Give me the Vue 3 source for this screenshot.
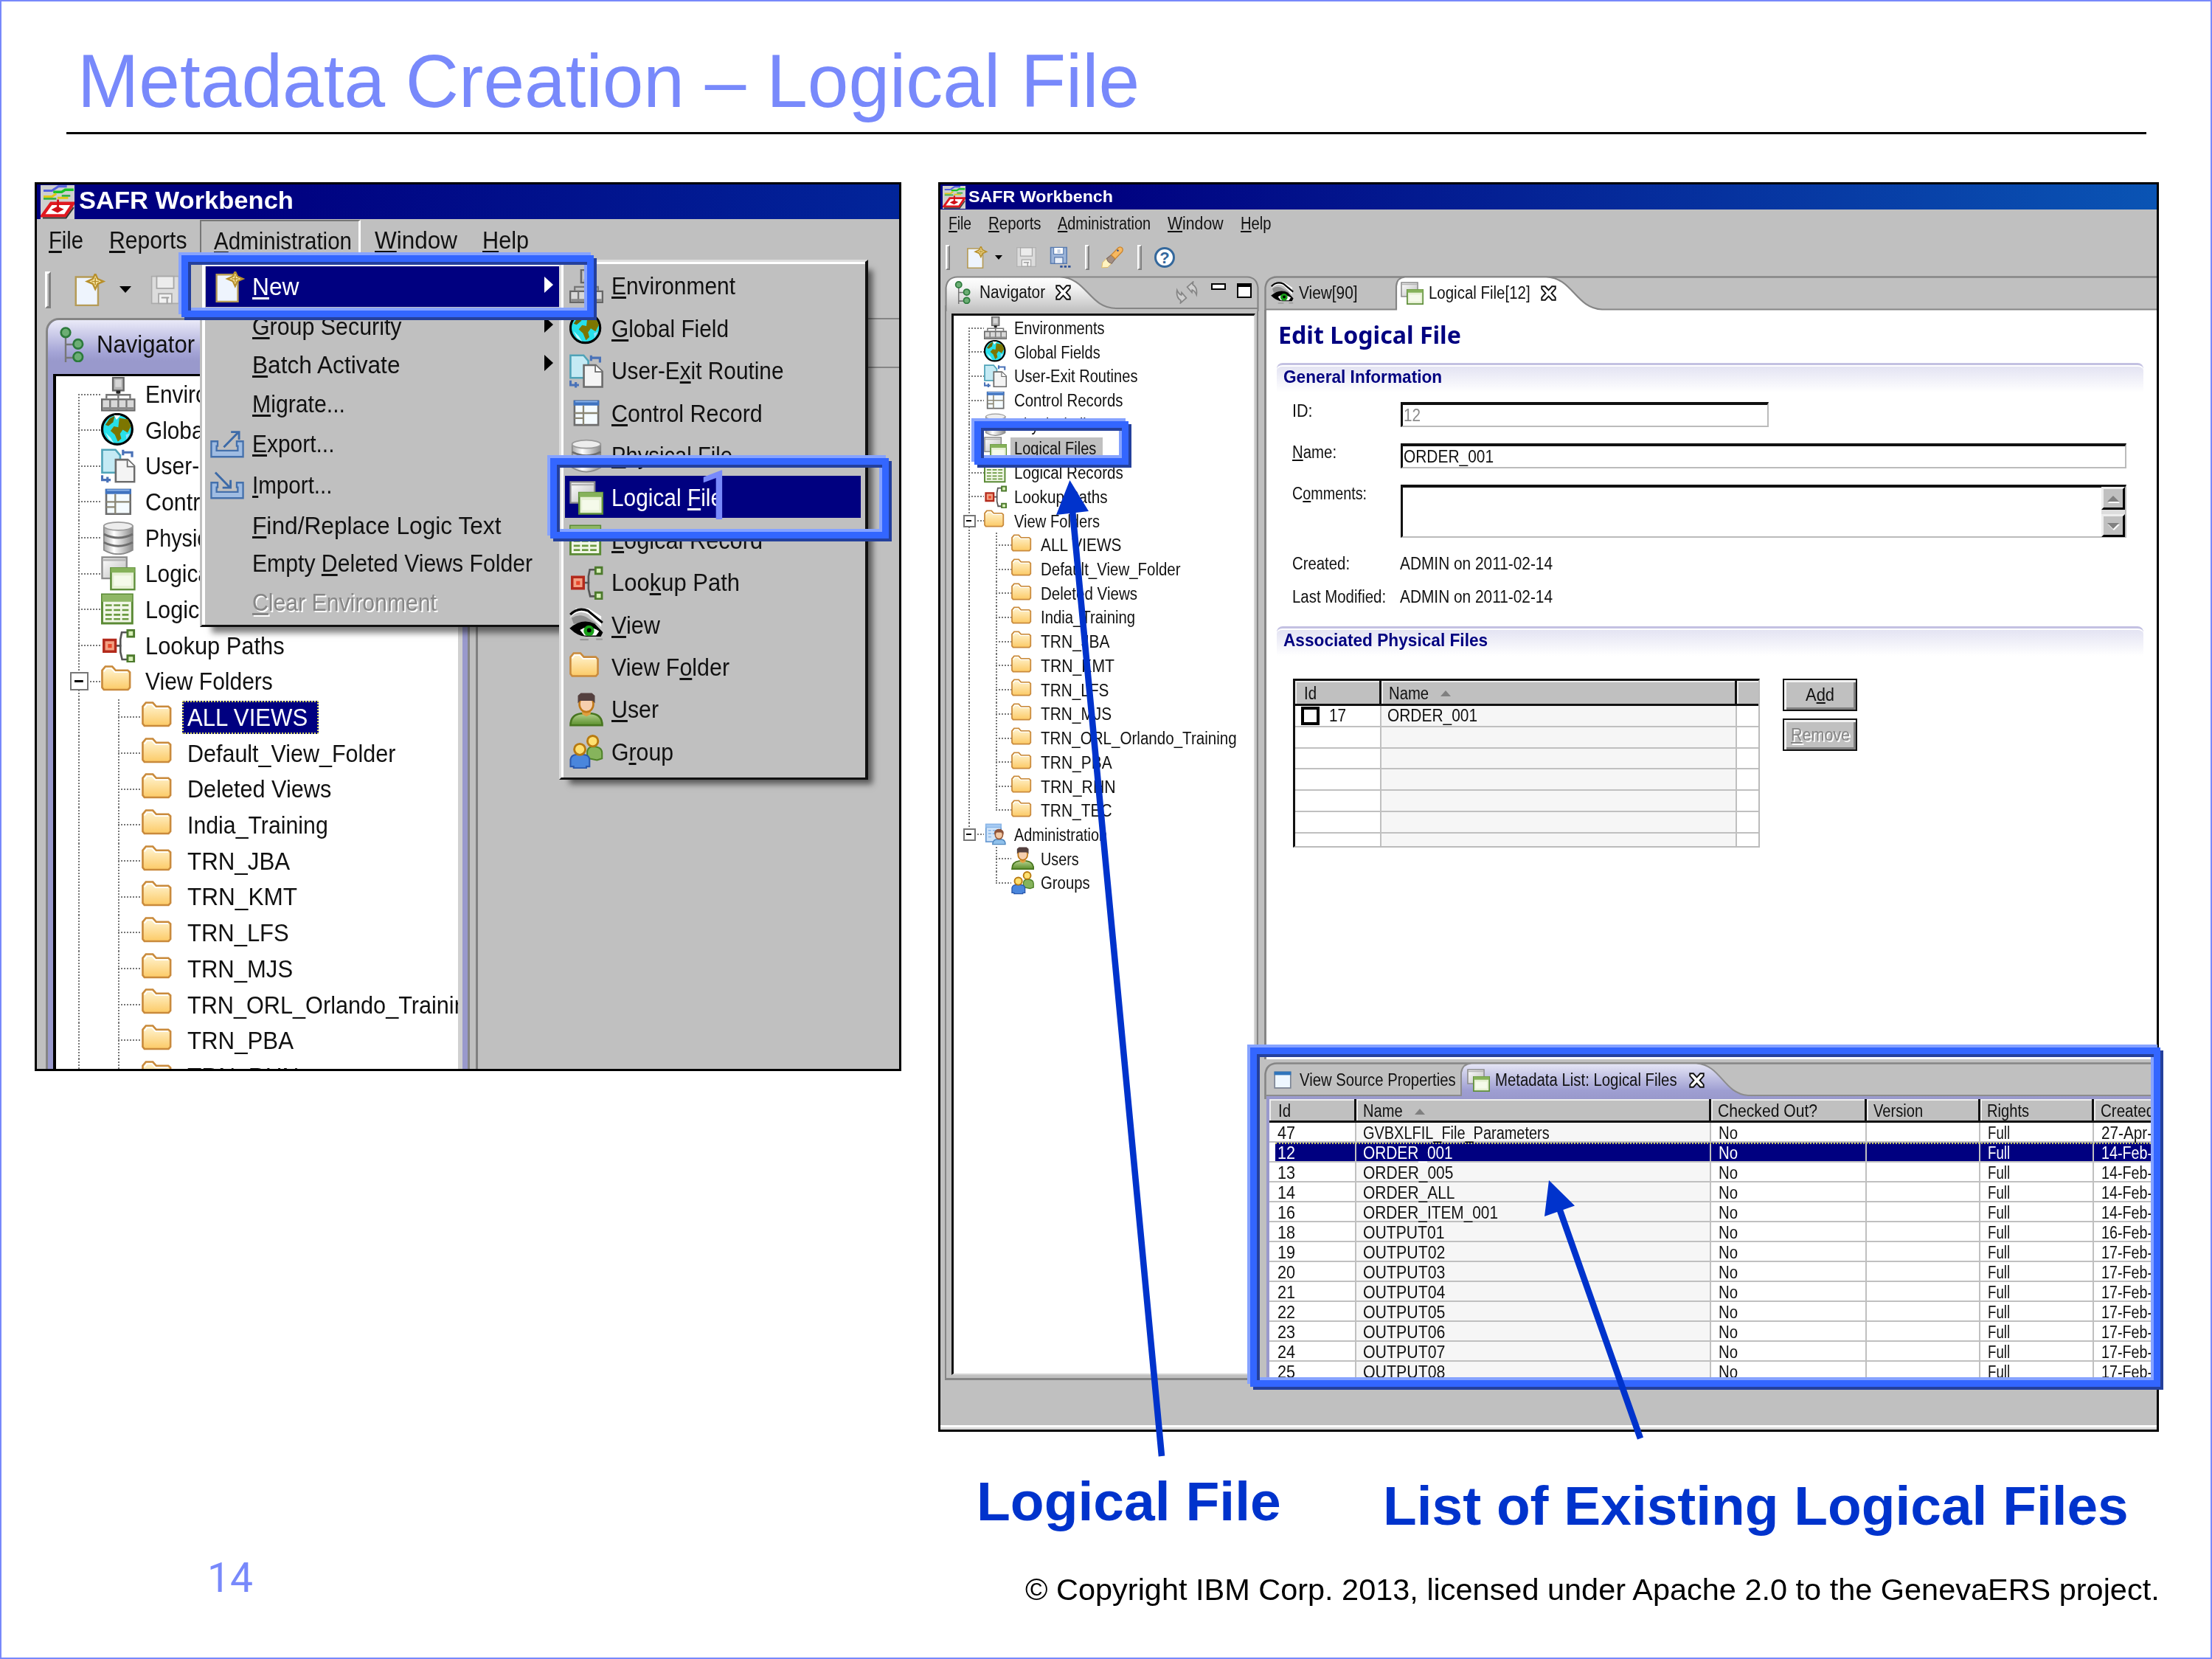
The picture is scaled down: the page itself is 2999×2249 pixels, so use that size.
<script setup>
import { h, withDirectives } from 'vue'

// Condenses a label to the given drawn width and keeps the flow in step with it.
const fit = {
  mounted(el, { value }) {
    const size = parseFloat(getComputedStyle(el).fontSize)
    const natural = el.getBoundingClientRect().width
    const target = value + size * 0.09
    el.style.transform = `scaleX(${target / natural})`
    el.style.marginLeft = `${-size * 0.035}px`
    el.style.marginRight = `${target - natural - size * 0.055}px`
  },
}

// Label with an optional mnemonic: the letter after "&" is underlined.
const T = (props) => {
  const i = props.s.indexOf('&')
  const parts = i < 0 ? [props.s] : [props.s.slice(0, i), h('u', props.s[i + 1]), props.s.slice(i + 2)]
  return withDirectives(h('span', { class: 't' }, parts), [[fit, Number(props.w)]])
}
T.props = ['s', 'w']

const roots = [
  ['env', 'Environments', 120.4], ['globe', 'Global Fields', 114.6], ['exit', 'User-Exit Routines', 165.4],
  ['control', 'Control Records', 145.4], ['physical', 'Physical Files', 116], ['lfile', 'Logical Files', 109.3],
  ['lrecord', 'Logical Records', 145.7], ['lookup', 'Lookup Paths', 124.6],
].map(([icon, s, w]) => ({ icon, s, w, lvl: 1 }))
const folders = [
  ['ALL VIEWS', 107.5], ['Default_View_Folder', 187.5], ['Deleted Views', 129], ['India_Training', 126],
  ['TRN_JBA', 91.4], ['TRN_KMT', 98], ['TRN_LFS', 90.4], ['TRN_MJS', 94], ['TRN_ORL_Orlando_Training', 263.6],
  ['TRN_PBA', 94.6], ['TRN_RHN', 99.6], ['TRN_TEC', 94.6],
].map(([s, w]) => ({ icon: 'folder', s, w, lvl: 2, outer: true }))
const tree = [
  ...roots,
  { icon: 'folder', s: 'View Folders', w: 114, lvl: 1, open: true },
  ...folders,
  { icon: 'admin', s: 'Administration', w: 124, lvl: 1, open: true, end: true },
  { icon: 'user', s: 'Users', w: 49.6, lvl: 2 },
  { icon: 'group', s: 'Groups', w: 64.6, lvl: 2 },
]
tree[20].end = true
tree[23].end = true
tree[0].first = true
const leftTree = tree.slice(0, 20)

const menuL = [['&File', 44], ['&Reports', 102.5], ['&Administration', 184], ['&Window', 109], ['&Help', 60]]
const menuR = [['&File', 29], ['&Reports', 69.5], ['&Administration', 124], ['&Window', 73.5], ['&Help', 39.5]]

const adminMenu = [
  { s: '&New', w: 60.5, h: 55, icon: 'new', sub: true, on: true },
  { s: '&Group Security', w: 199.5, h: 53, sub: true },
  { s: '&Batch Activate', w: 197.5, h: 52, sub: true },
  { s: '&Migrate...', w: 123, h: 53 },
  { s: '&Export...', w: 108.5, h: 55, icon: 'export' },
  { s: '&Import...', w: 105.5, h: 58, icon: 'import' },
  { s: '&Find/Replace Logic Text', w: 334.5, h: 51 },
  { s: 'Empty &Deleted Views Folder', w: 377, h: 52 },
  { s: '&Clear Environment', w: 247, h: 53, off: true },
]
const newMenu = [
  ['env', '&Environment', 165], ['globe', '&Global Field', 156], ['exit', 'User-E&xit Routine', 230.5],
  ['control', '&Control Record', 201.7], ['physical', '&Physical File', 161], ['lfile', 'Logical &File', 148],
  ['lrecord', '&Logical Record', 202], ['lookup', 'Loo&kup Path', 171], ['eye', '&View', 63],
  ['folder', 'View F&older', 157], ['user', '&User', 61], ['group', 'G&roup', 81],
]

const rows = [
  ['47', 'GVBXLFIL_File_Parameters', 250.6, '27-Apr-'], ['12', 'ORDER_001', 119.6, '14-Feb-'],
  ['13', 'ORDER_005', 120.4, '14-Feb-'], ['14', 'ORDER_ALL', 122.4, '14-Feb-'],
  ['16', 'ORDER_ITEM_001', 181, '14-Feb-'], ['18', 'OUTPUT01', 108.5, '16-Feb-'],
  ...[2, 3, 4, 5, 6, 7, 8].map((n) => [String(n + 17), `OUTPUT0${n}`, 109.4, '17-Feb-']),
]
const cols = [
  ['Id', 15, 'c-id'], ['Name', 51.5, 'c-name'], ['Checked Out?', 133, 'c-out'],
  ['Version', 65, 'c-ver'], ['Rights', 55, 'c-rights'], ['Created', 71, 'c-date'],
]
</script>

<template>
  <div class="slide">
    <svg class="defs" width="0" height="0">
      <defs>
        <linearGradient id="g-fold" x1="0" y1="0" x2="0" y2="1"><stop offset="0" stop-color="#fff6d6" /><stop offset="1" stop-color="#fcca66" /></linearGradient>
        <linearGradient id="g-gray" x1="0" y1="0" x2="1" y2="1"><stop offset="0" stop-color="#fff" /><stop offset="1" stop-color="#bdbdbd" /></linearGradient>
        <linearGradient id="g-cyl" x1="0" y1="0" x2="1" y2="0"><stop offset="0" stop-color="#a8a8a8" /><stop offset=".35" stop-color="#fff" /><stop offset="1" stop-color="#8a8a8a" /></linearGradient>
        <linearGradient id="g-purple" x1="0" y1="0" x2="0" y2="1"><stop offset="0" stop-color="#e6e6f6" /><stop offset=".75" stop-color="#9f9fd2" /><stop offset="1" stop-color="#9999cc" /></linearGradient>
        <linearGradient id="g-white" x1="0" y1="0" x2="0" y2="1"><stop offset="0" stop-color="#fff" /><stop offset=".3" stop-color="#f4f4f4" /><stop offset="1" stop-color="#c0c0c0" /></linearGradient>
        <linearGradient id="g-green" x1="0" y1="0" x2="0" y2="1"><stop offset="0" stop-color="#b4d08c" /><stop offset="1" stop-color="#5a8f2c" /></linearGradient>
      </defs>
      <symbol id="i-folder" viewBox="0 0 16 16">
        <path d="M.5 11V3L2 1.2h3.2L6.8 3h5.6l1 .9V11l-.9 1H1.3z" fill="url(#g-fold)" stroke="#c98a3c" stroke-width=".9" />
        <path d="M1.3 3.6l1.2-1.5h2.3l1.6 1.7h6" fill="none" stroke="#fff" stroke-width=".6" />
      </symbol>
      <symbol id="i-env" viewBox="0 0 16 16">
        <path d="M8 6v4M2.5 10V8.3h11V10" fill="none" stroke="#777" stroke-width=".8" />
        <rect x="5.5" y=".3" width="5" height="6" fill="#b5b5b5" stroke="#666" stroke-width=".8" /><rect x="6.6" y="1.3" width="2.8" height="3.4" fill="#d6d6d6" /><path d="M7 6.3h2v1.4H7z" fill="#222" />
        <path d="M.4 10.4h15.2v5.2H.4z" fill="#d8d8d8" stroke="#666" stroke-width=".8" /><path d="M4.2 10.4v5M8 10.4v5M11.8 10.4v5" stroke="#777" stroke-width=".8" /><path d="M.8 14h14.4v1.2H.8z" fill="#8a8a8a" />
      </symbol>
      <symbol id="i-globe" viewBox="0 0 16 16">
        <circle cx="7.5" cy="7.5" r="7" fill="#27e0ea" stroke="#000" stroke-width="1.1" />
        <path d="M2 5.5L4 2.5l2.4-1.2L5.6 4.2 3.4 6z" fill="#6a6400" /><path d="M8.5 2.3l4 .6 1.4 3.2-1.6 3-2.2-1.4L8.8 9.6l.6 2.2-1.6 1.5L6.4 10 4.4 8.2 6 6.2l2 .4z" fill="#7d7600" /><path d="M6 .9l3 .2-1.8 2z" fill="#fff" /><path d="M2 9l2.4 2.4L6 14l-2.4-1.8z" fill="#bff7fb" /><path d="M11.5 10l1.8-.6-1.4 2.8z" fill="#9df" />
      </symbol>
      <symbol id="i-exit" viewBox="0 0 16 16">
        <path d="M.5.6h6.2l2.2 2.6v8H.5z" fill="#c4eaf4" stroke="#4fa3b8" stroke-width=".9" />
        <path d="M6.8 5.2h5.6l3.1 3v7.3H6.8z" fill="#f4f4f4" stroke="#6b6b6b" stroke-width=".9" /><path d="M12.2 5.2v3.2h3.3" fill="#fff" stroke="#6b6b6b" stroke-width=".6" />
        <path d="M10.2.6v2.6M10.4 1.8h4V4M.5 12.4v2.2h4M3 13.2v2.6" fill="none" stroke="#4a72b8" stroke-width="1.1" />
      </symbol>
      <symbol id="i-control" viewBox="0 0 16 16">
        <path d="M2.4 2.4h11.2v11.2H2.4z" fill="#f4fbff" stroke="#6d6d6d" stroke-width=".9" /><path d="M2 2h12v2.4H2z" fill="#3f73c0" /><path d="M2.8 2.6h10.4" stroke="#8fb6ea" stroke-width=".6" /><path d="M6.6 4.4v9.2M2.4 8h11.2M2.4 10.4h4" stroke="#8b8775" stroke-width=".8" />
      </symbol>
      <symbol id="i-physical" viewBox="0 0 16 16">
        <path d="M1.3 2.4h13.4v11.2q-6.7 3.8-13.4 0z" fill="url(#g-cyl)" stroke="#8a8a8a" stroke-width=".6" /><ellipse cx="8" cy="2.5" rx="6.7" ry="1.9" fill="#ededed" stroke="#9a9a9a" stroke-width=".6" />
        <path d="M1.3 6.2q6.7 3.4 13.4 0M1.3 10q6.7 3.4 13.4 0" fill="none" stroke="#6e6e6e" stroke-width="1" />
      </symbol>
      <symbol id="i-lfile" viewBox="0 0 16 16">
        <path d="M.5.5h11.4v9.8H.5z" fill="url(#g-gray)" stroke="#8c8c8c" stroke-width=".8" /><path d="M1 1.8h10.4" stroke="#b4b4b4" stroke-width=".8" />
        <path d="M4.6 5.6h11v9.9h-11z" fill="#e6f0d4" stroke="#5f8f3a" stroke-width=".9" /><path d="M4.6 5.4h11v2.2h-11z" fill="#86b25a" /><path d="M6 9h8v4.8H6z" fill="#f5faea" />
      </symbol>
      <symbol id="i-lrecord" viewBox="0 0 16 16">
        <path d="M.5 1h14v13.4H.5z" fill="#f2f7e8" stroke="#5a8a34" stroke-width="1" /><path d="M.5 1h14v3.4H.5z" fill="#8fb766" /><path d="M2 6h11M2 8.2h11M2 10.4h11M2 12.4h11" stroke="#6b9a40" stroke-width=".9" stroke-dasharray="3 .9" />
      </symbol>
      <symbol id="i-lookup" viewBox="0 0 16 16">
        <path d="M6.5 8h3M12 1.8H9.6L9 5v6l.8 3.4H12" fill="none" stroke="#555" stroke-width=".9" />
        <path d="M1.3 5.3h5.4v5.4H1.3z" fill="#f3a083" stroke="#b32a1c" stroke-width="1.2" /><path d="M3.2 7.2h1.8V9H3.2z" fill="#e8472a" />
        <path d="M12.3.8h3v3h-3zM12.3 12.6h3v3h-3z" fill="#d8f0b8" stroke="#4c7a2c" stroke-width="1" />
      </symbol>
      <symbol id="i-eye" viewBox="0 0 16 16">
        <path d="M0 5Q4 .5 9 3l6 6V4L9 .3H3z" fill="#fff" /><path d="M.4 3.2Q4-.6 8.8 1.4L15.6 7" fill="none" stroke="#000" stroke-width="1.1" /><path d="M1 4.800q4-2.600 8 .2l4 2.600H2z" fill="#8e8e8e" />
        <path d="M.2 9.600Q6 4.600 12 7.600l3.800 4-1 2H8Q4 13.600 0 9.600z" fill="#000" /><path d="M5 10.400q4-2.600 9 .6l-1.400 2H7z" fill="#fff" /><circle cx="9.2" cy="10.8" r="2.5" fill="#18a018" /><circle cx="9.3" cy="10.6" r="1" fill="#000" /><path d="M5 15h4M12.6 14.8h3" stroke="#999" stroke-width=".8" />
      </symbol>
      <symbol id="i-user" viewBox="0 0 16 16">
        <path d="M.5 15.4q0-5 5-5.6h5q5 .6 5 5.6z" fill="url(#g-green)" stroke="#47751f" stroke-width=".9" /><path d="M6 7h4v3.2l-2 1-2-1z" fill="#e0a040" />
        <ellipse cx="8" cy="5.4" rx="3.3" ry="3.7" fill="#f6cfae" stroke="#c07818" stroke-width=".9" /><path d="M4 5V1.4L5.4.2h5.2L12 1.4V5l-1-1.2H5z" fill="#54403f" />
      </symbol>
      <symbol id="i-group" viewBox="0 0 16 16">
        <path d="M8.4 11V8q.4-2.4 3-2.4 4 .2 4 3v2.6L13 12z" fill="#86b45c" stroke="#4e8228" stroke-width=".7" /><circle cx="11" cy="3" r="2.5" fill="#ffe070" stroke="#b87a10" stroke-width="1" />
        <path d="M.5 15V11.6q.4-2 2.6-2.2h3.6q2.6.2 2.8 2.2V15H8v.7H2V15z" fill="#4a86dc" stroke="#2a58ac" stroke-width=".7" /><circle cx="4.9" cy="6.9" r="2.6" fill="#ffe070" stroke="#b87a10" stroke-width="1" />
      </symbol>
      <symbol id="i-admin" viewBox="0 0 16 16">
        <path d="M1.4.8h10.4v12H1.4z" fill="#cfe4fa" stroke="#6c9cd4" stroke-width=".9" /><path d="M1.4.8h10.4v2H1.4zM3 5h2M3 7.2h2M3 9.4h2M6 5h4.6M6 7.2h2" stroke="#8ab6e8" stroke-width=".8" fill="#a9cdf4" />
        <path d="M6 14.6q.2-3 2.4-3.4h4q2.4.4 2.4 3.4z" fill="#8fc0ea" stroke="#4d86bf" stroke-width=".7" /><ellipse cx="10.4" cy="8" rx="2.6" ry="2.9" fill="#f2c8a4" stroke="#9b5a38" stroke-width=".8" /><path d="M7.2 8V6q1-2 3.2-2t3.2 2v2l-1-1.6H8.2z" fill="#8c5238" />
      </symbol>
      <symbol id="i-new" viewBox="0 0 16 16">
        <path d="M1 1.6h9l2 2v12H1z" fill="#eef4fd" stroke="#b59b57" stroke-width=".9" /><path d="M10.6 0l1.2 2.6 2.8 1.2-2.8 1.2-1.2 2.6-1.2-2.6-2.8-1.2 2.8-1.2z" fill="#fff0b0" stroke="#b8902c" stroke-width=".9" /><path d="M10.6 2v3.6M8.8 3.8h3.6" stroke="#b8902c" stroke-width=".6" />
      </symbol>
      <symbol id="i-save" viewBox="0 0 16 16">
        <path d="M1 1h14v14H1z" fill="#dcdcdc" stroke="#ababab" stroke-width=".6" /><path d="M3.6 1h8.8v6.2H3.6z" fill="#ececec" stroke="#a8a8a8" stroke-width=".7" /><path d="M4.6 10h6.8v5H4.6z" fill="#f2f2f2" stroke="#a8a8a8" stroke-width=".7" /><path d="M6 12h4M9 12v3" stroke="#a0a0a0" stroke-width=".8" />
      </symbol>
      <symbol id="i-saveall" viewBox="0 0 16 16">
        <path d="M.8.8h11.6v11.6H.8z" fill="#9cb4d8" stroke="#5a7cb0" stroke-width=".8" /><path d="M3 .8h7v4.8H3z" fill="#fff" stroke="#5a7cb0" stroke-width=".6" /><path d="M5.6 2.2h2.2v2.6H5.6z" fill="#c7d3e6" /><path d="M3.6 8h6v4.4h-6z" fill="#e8eef8" stroke="#4a6ca4" stroke-width=".6" /><path d="M7.6 14.6h8" stroke="#2c4f96" stroke-width="1.4" stroke-dasharray="1.8 1.1" />
      </symbol>
      <symbol id="i-torch" viewBox="0 0 16 16">
        <path d="M.4 15.4L1 11.6l3.4-3.4 3.6 3.4-3.2 3.6z" fill="#fff3c0" stroke="#e0b860" stroke-width=".5" /><path d="M4 8.8l3.2-2.6 3 2.8-2.6 3.4q-3-.6-3.6-3.6z" fill="#a48f83" stroke="#7d6a60" stroke-width=".6" /><path d="M7.2 6.2L12.4.9q1.6-1 2.8.3.9 1.4-.2 2.8L10.2 9z" fill="#f7b860" stroke="#c98530" stroke-width=".7" /><path d="M11.6 3.4l.8-.8" stroke="#2a4c90" stroke-width="1.2" />
      </symbol>
      <symbol id="i-nav" viewBox="0 0 16 16">
        <path d="M4 4v12M4 8h6M4 14h6" fill="none" stroke="#777" stroke-width=".8" /><g fill="#6cae74" stroke="#2c7a3c" stroke-width=".9"><circle cx="4" cy="2.6" r="2.1" /><circle cx="9.6" cy="7.8" r="2.1" /><circle cx="9.6" cy="13.6" r="2.1" /></g>
      </symbol>
      <symbol id="i-close" viewBox="0 0 10 10">
        <path d="M.6.6h2.2L5 3 7.2.6h2.2v1.6L6.9 5l2.5 2.8v1.6H7.2L5 7 2.8 9.4H.6V7.8L3.1 5 .6 2.2z" fill="#fff" stroke="#111" stroke-width=".9" />
      </symbol>
      <symbol id="i-sync" viewBox="0 0 16 16">
        <path d="M8.300 4.200L12.400.6 12.200 2.400Q15.600 4.600 14.800 9.600 13.600 6.800 11.800 6.200L11.600 8zM7.700 11.800L3.600 15.400 3.800 13.600Q.4 11.400 1.200 6.400 2.400 9.200 4.200 9.800L4.400 8z" fill="#cfcfcf" stroke="#858585" stroke-width=".9" />
      </symbol>
      <symbol id="i-export" viewBox="0 0 16 13">
        <path d="M.5 5.2h3v2.2H3v2.2h10V7.4h-.5V5.2h3v7.3H.5z" fill="#9fbce2" stroke="#4470ac" stroke-width=".8" /><path d="M6.4 8L13 1.2M9.8.8h3.8v3.6" fill="none" stroke="#3c6aa8" stroke-width="1" />
      </symbol>
      <symbol id="i-import" viewBox="0 0 16 13">
        <path d="M.5 5.2h3v2.2H3v2.2h10V7.4h-.5V5.2h3v7.3H.5z" fill="#9fbce2" stroke="#4470ac" stroke-width=".8" /><path d="M2.4.4L9 7.2M5.8 7.6h3.8V4" fill="none" stroke="#3c6aa8" stroke-width="1" />
      </symbol>
      <symbol id="i-window" viewBox="0 0 16 16">
        <path d="M.8.8h14.4v14.4H.8z" fill="#eef7ff" stroke="#7b8494" stroke-width="1.1" /><path d="M.4.4h15.2v3.2H.4z" fill="#2f74bb" />
      </symbol>
      <symbol id="i-app" viewBox="0 0 16 16">
        <path d="M0 0h16v16H0z" fill="#cfcfcf" /><path d="M1.4 2.6h4l3-2h4" fill="none" stroke="#5560e0" stroke-width="1.1" /><path d="M6 3.2h4l1.6-1h4" fill="none" stroke="#18c428" stroke-width="1.2" /><path d="M1.4 5.4h4l2-1.4M8 6h5" fill="none" stroke="#e0c818" stroke-width="1" /><path d="M1.4 6.4h6M10 5h4" stroke="#38b048" stroke-width=".9" />
        <path d="M5 8.600h10.400L11.600 14.400H.8z" fill="#fff" stroke="#e01820" stroke-width="1.5" /><path d="M5 11.600L8 10l3 1.400L8 13z" fill="#d01018" /><path d="M8.200 6.800v4" stroke="#d01018" stroke-width="1" /><path d="M1 15.500h11l3.600-5" fill="none" stroke="#333" stroke-width=".7" />
      </symbol>
    </svg>

    <h1 class="title"><T s="Metadata Creation – Logical File" w="1431" /></h1>
    <div class="rule"></div>

    <!-- Workbench with the Administration menu open -->
    <section class="win win-l">
      <header class="titlebar"><svg class="app"><use href="#i-app" /></svg><b><T s="SAFR Workbench" w="288" /></b></header>
      <nav class="menubar"><span v-for="(m, i) in menuL" :key="i" :class="{ pressed: i === 2 }"><T :s="m[0]" :w="m[1]" /></span></nav>
      <div class="toolbar">
        <i class="grip"></i><svg class="b-new"><use href="#i-new" /></svg><i class="drop"></i><svg class="b-save"><use href="#i-save" /></svg>
      </div>
      <div class="body">
        <div class="navpane">
          <div class="navhead"><svg class="nav-ic"><use href="#i-nav" /></svg><T s="Navigator" w="130" /></div>
          <div class="tree big">
            <div v-for="(n, i) in leftTree" :key="i" class="row" :class="['l' + n.lvl, { first: n.first, outer: n.outer, open: n.open }]">
              <i v-if="n.open" class="box"></i><svg class="ic"><use :href="'#i-' + n.icon" /></svg>
              <span class="name" :class="{ sel: i === 9 }"><T :s="n.s" :w="n.w * 1.49" /></span>
            </div>
          </div>
        </div>
        <div class="edge"></div>
        <div class="empty"><div class="emptyhead"></div></div>
      </div>
    </section>

    <div class="popup admin">
      <div v-for="m in adminMenu" :key="m.s" class="item" :class="{ on: m.on, off: m.off }" :style="{ height: m.h + 'px' }">
        <span class="slot"><svg v-if="m.icon" :class="m.icon"><use :href="'#i-' + m.icon" /></svg></span>
        <T :s="m.s" :w="m.w" /><i v-if="m.sub" class="sub"></i>
      </div>
    </div>
    <div class="popup newmenu">
      <div v-for="m in newMenu" :key="m[1]" class="item" :class="{ on: m[0] === 'lfile' }">
        <svg class="ic"><use :href="'#i-' + m[0]" /></svg><T :s="m[1]" :w="m[2]" />
      </div>
    </div>

    <!-- Workbench with the logical file editor -->
    <section class="win win-r">
      <header class="titlebar"><svg class="app"><use href="#i-app" /></svg><b><T s="SAFR Workbench" w="194" /></b></header>
      <nav class="menubar"><span v-for="(m, i) in menuR" :key="i"><T :s="m[0]" :w="m[1]" /></span></nav>
      <div class="toolbar">
        <i class="grip"></i><svg class="b-new"><use href="#i-new" /></svg><i class="drop"></i>
        <svg class="b-save"><use href="#i-save" /></svg><svg class="b-all"><use href="#i-saveall" /></svg>
        <i class="grip g2"></i><svg class="b-torch"><use href="#i-torch" /></svg><i class="grip g3"></i><span class="help">?</span>
      </div>
      <div class="body">
        <div class="navpane">
          <div class="navhead">
            <svg class="curve" width="426" height="48" viewBox="0 0 426 48">
              <path d="M1.500 48V16Q3 2 17 1.500H410Q423 2 424.500 16V48z" fill="#c0c0c0" />
              <path d="M1.500 48V16Q3 2 17 1.500H156C192 2 196 44 232 44V48z" fill="url(#g-white)" />
              <path d="M1.500 48V16Q3 2 17 1.500H410Q423 2 424.500 16V48M156 1.500C192 2 196 44 232 44H424" fill="none" stroke="#858585" stroke-width="2.2" />
            </svg>
            <svg class="nav-ic"><use href="#i-nav" /></svg><T s="Navigator" w="87" /><svg class="x"><use href="#i-close" /></svg>
            <svg class="sync"><use href="#i-sync" /></svg><i class="min"></i><i class="max"></i>
          </div>
          <div class="tree">
            <div v-for="(n, i) in tree" :key="i" class="row" :class="['l' + n.lvl, { first: n.first, outer: n.outer, open: n.open, end: n.end }]">
              <i v-if="n.open" class="box"></i><svg class="ic"><use :href="'#i-' + n.icon" /></svg>
              <span class="name" :class="{ gray: i === 5 }"><T :s="n.s" :w="n.w" /></span>
            </div>
          </div>
        </div>
        <div class="main">
          <div class="tabs">
            <svg class="curve" width="1210" height="47" viewBox="0 0 1210 47">
              <path d="M1.500 47V16Q3 2 17 1.500H1210" fill="none" stroke="#858585" stroke-width="2.4" />
              <path d="M179 47V14Q180 2 191 1.500H382C418 2 422 44 458 45.500H1210V47z" fill="#fff" />
              <path d="M1.500 45.500H179V14Q180 2 191 1.500H382C418 2 422 44 458 45.500H1210" fill="none" stroke="#858585" stroke-width="2.2" />
            </svg>
            <svg class="ic"><use href="#i-eye" /></svg><span class="tx1"><T s="View[90]" w="77.5" /></span>
            <svg class="ic ic2"><use href="#i-lfile" /></svg><span class="tx2"><T s="Logical File[12]" w="135.500" /></span><svg class="x"><use href="#i-close" /></svg>
          </div>
          <div class="editor">
            <h2><T s="Edit Logical File" w="245" /></h2>
            <h3><T s="General Information" w="213" /></h3>
            <div class="form">
              <label><T s="ID:" w="25.5" /></label><div class="field short"><T s="12" w="21" /></div>
              <label><T s="&Name:" w="58" /></label><div class="field"><T s="ORDER_001" w="120" /></div>
              <label><T s="C&omments:" w="99" /></label>
              <div class="field area"><div class="scroll"><i class="up"></i><i class="dn"></i></div></div>
              <label class="mid"><T s="Created:" w="76" /></label><div class="mid"><T s="ADMIN on 2011-02-14" w="205" /></div>
              <label class="mid"><T s="Last Modified:" w="125" /></label><div class="mid"><T s="ADMIN on 2011-02-14" w="205" /></div>
            </div>
            <h3><T s="Associated Physical Files" w="275" /></h3>
            <div class="assoc">
              <div class="grid">
                <div class="gh"><span class="a"><T s="Id" w="15" /></span><span class="b"><T s="Name" w="52" /><i class="sort"></i></span><span class="c"></span></div>
                <div v-for="n in 7" :key="n" class="gr">
                  <span class="a"><template v-if="n === 1"><i class="check"></i><T s="17" w="21" /></template></span>
                  <span class="b"><T v-if="n === 1" s="ORDER_001" w="120" /></span><span class="c"></span>
                </div>
              </div>
              <div class="btns"><div class="btn"><T s="A&dd" w="37" /></div><div class="btn off"><T s="&Remove" w="78" /></div></div>
            </div>
          </div>
          <div class="listpane">
            <div class="tabs">
              <svg class="curve" width="1210" height="50" viewBox="0 0 1210 50">
                <path d="M1.500 50V16Q3 2 17 1.500H1210" fill="none" stroke="#858585" stroke-width="2.6" />
                <path d="M3 50V46H268V14Q269 2 281 2H586C620 4 622 42 656 45.500H1210V50z" fill="url(#g-purple)" />
                <path d="M3 45H267V14Q269 2 281 1.500H586C620 4 622 42 656 45H1210" fill="none" stroke="#8c8c8c" stroke-width="2" />
              </svg>
              <svg class="wi"><use href="#i-window" /></svg><span class="tx1"><T s="View Source Properties" w="209.500" /></span>
              <svg class="ic ic2"><use href="#i-lfile" /></svg><span class="tx2"><T s="Metadata List: Logical Files" w="244.500" /></span><svg class="x"><use href="#i-close" /></svg>
            </div>
            <div class="list">
              <div class="lh"><span v-for="c in cols" :key="c[0]" :class="c[2]"><T :s="c[0]" :w="c[1]" /><i v-if="c[0] === 'Name'" class="sort"></i></span></div>
              <div v-for="(r, i) in rows" :key="r[0]" class="lr" :class="{ sel: i === 1 }">
                <span class="c-id"><T :s="r[0]" w="22" /></span><span class="c-name"><T :s="r[1]" :w="r[2]" /></span>
                <span class="c-out"><T s="No" w="24" /></span><span class="c-ver"></span><span class="c-rights"><T s="Full" w="28" /></span>
                <span class="c-date"><T :s="r[3]" w="67" /></span>
              </div>
            </div>
          </div>
        </div>
      </div>
      <footer class="status"></footer>
    </section>

    <!-- Callouts -->
    <div class="frame f-new"></div>
    <div class="frame f-file"></div>
    <div class="frame f-tree"></div>
    <div class="frame f-list"></div>
    <div class="step">1</div>
    <svg class="arrows" width="2999" height="2249" viewBox="0 0 2999 2249">
      <path d="M1454 692L1575 1974M2114 1638L2224 1950" stroke="#0033cc" stroke-width="8.600" />
      <path d="M1450.400 651L1476 693 1432 698zM2100 1600L2135 1634.500 2094 1649z" fill="#0033cc" />
    </svg>
    <div class="cap cap-file"><T s="Logical File" w="406" /></div>
    <div class="cap cap-list"><T s="List of Existing Logical Files" w="1004" /></div>
    <div class="page"><T s="14" w="57" /></div>
    <div class="copy"><T s="© Copyright IBM Corp. 2013, licensed under Apache 2.0 to the GenevaERS project." w="1534" /></div>
  </div>
</template>

<style>
body { background: #fff; }
.t { display: inline-block; flex: none; white-space: pre; transform-origin: 0 50%; }
.t u { text-decoration: underline; text-decoration-thickness: 0.08em; text-underline-offset: 0.1em; text-decoration-skip-ink: none; }
</style>

<style scoped>
.slide { position: relative; box-sizing: border-box; width: 2999px; height: 2249px; overflow: hidden; border: 2px solid #7889fb; background: #fff; font-family: "Liberation Sans", Arial, sans-serif; color: #111; line-height: 1; }
.slide > * { position: absolute; box-sizing: border-box; }
.slide svg { display: block; flex: none; }
.slide i { display: block; flex: none; box-sizing: border-box; }
.title { left: 107px; top: 56px; margin: 0; font-size: 102px; font-weight: 400; line-height: 105px; color: #7889fb; }
.rule { left: 88px; top: 177px; width: 2820px; height: 3px; background: #000; }

.win { border: 3px solid #000; background: #c0c0c0; overflow: hidden; display: flex; flex-direction: column; }
.win-l { left: 45px; top: 245px; width: 1175px; height: 1205px; font-size: 33.500px; }
.win-r { left: 1270px; top: 245px; width: 1655px; height: 1694px; font-size: 23px; }
.titlebar { display: flex; align-items: center; flex: none; color: #fff; }
.menubar { display: grid; align-items: center; flex: none; }
.toolbar { display: flex; align-items: center; flex: none; }
.body { display: flex; flex: 1; min-height: 0; }

.win-l .titlebar { height: 47px; background: linear-gradient(90deg, #000080 25%, #02259a); gap: 7px; padding-left: 5px; font-size: 33px; }
.win-l .app { width: 46px; height: 46px; }
.win-l .titlebar b { padding-bottom: 4px; }
.win-l .menubar { height: 57px; padding-left: 17px; grid-template-columns: 82px 142px 218px 146px auto; }
.menubar .pressed { position: relative; padding-top: 3px; }
.menubar .pressed::before { content: ""; position: absolute; left: -20px; top: -9px; width: 218px; height: 60px; box-sizing: border-box; border: 2px solid #777; border-right: 3px solid #fff; border-bottom: 0; }
.win-l .toolbar { height: 77px; padding-left: 11px; }
.grip { width: 8px; height: 50px; border: 3px solid #fff; border-right-color: #808080; border-bottom-color: #808080; background: #c0c0c0; }
.b-new { width: 44px; height: 44px; margin-left: 31px; }
.drop { margin-left: 18px; border: 8px solid transparent; border-top: 9px solid #000; border-bottom: 0; }
.b-save { width: 42px; height: 42px; margin-left: 25px; }

.win-l .navpane { width: 575px; margin-left: 12px; border: 3px solid #858585; border-bottom: 0; border-radius: 18px 0 0 0; background: #9999cc; display: flex; flex-direction: column; overflow: hidden; box-sizing: border-box; }
.win-l .navhead { height: 73px; flex: none; display: flex; align-items: center; padding: 0 0 8px 12px; box-sizing: border-box; background: linear-gradient(#eaeaf8, #a4a4d6 60%, #9999cc 75%); }
.win-l .nav-ic { width: 48px; height: 48px; margin-right: 7px; }
.win-l .tree { margin-left: 7px; margin-right: 7px; flex: 1; border-left: 4px solid #000; border-top: 3px solid #000; border-right: 6px solid #d0d0d0; }
.edge { width: 11px; border-right: 3px solid #808080; box-sizing: border-box; }
.empty { flex: 1; }
.emptyhead { height: 68px; border: 2px solid #858585; border-width: 2px 0; box-sizing: border-box; }

.tree { --k: 1; background: #fff; overflow: hidden; }
.tree.big { --k: 1.488; }
.row { position: relative; display: flex; align-items: center; height: calc(32.720px * var(--k)); padding-left: calc(41px * var(--k)); }
.row.l2 { padding-left: calc(77.700px * var(--k)); }
.row .ic { width: calc(31.400px * var(--k)); height: calc(31.400px * var(--k)); }
.row .name { display: flex; align-items: center; height: calc(30px * var(--k)); margin-left: calc(5px * var(--k)); padding: calc(2px * var(--k)) calc(10px * var(--k)) 0 calc(5px * var(--k)); box-sizing: border-box; }
.big .row .name { padding-top: 1px; }
.big .row.l2 .name { margin-left: 9px; }
.row .name.sel { background: #000080; color: #fff; outline: 2px dotted #d8d860; outline-offset: -2px; padding-right: 17px; }
.row .name.gray { background: #c0c0c0; }
.row::before { content: ""; position: absolute; left: calc(20px * var(--k)); top: 0; bottom: 0; width: calc(21px * var(--k)); background: repeating-linear-gradient(#777 0 2px, transparent 2px 4px) 0 0 / 2px 100% no-repeat, repeating-linear-gradient(90deg, #777 0 2px, transparent 2px 4px) 0 50% / 100% 2px no-repeat; }
.row.first::before { top: 50%; background-position: 0 0, 0 0; }
.row.l2::before { left: calc(56.500px * var(--k)); }
.row.end.l2::before { bottom: 48%; background-position: 0 0, 0 100%; }
.row.l1.end::before { bottom: 48%; background-position: 0 0, 0 100%; }
.row.outer::after { content: ""; position: absolute; left: calc(20px * var(--k)); top: 0; bottom: 0; width: 2px; background: repeating-linear-gradient(#777 0 2px, transparent 2px 4px); }
.box { position: absolute; z-index: 1; left: calc(12.500px * var(--k)); width: calc(17px * var(--k)); height: calc(17px * var(--k)); border: 2px solid #777; background: linear-gradient(#000, #000) center / 56% calc(2px * var(--k)) no-repeat #fff; }

.popup { background: #c0c0c0; font-size: 33.500px; border: 3px solid #111; border-top-color: #ddd; border-left-color: #ddd; }
.popup .item { display: flex; align-items: center; position: relative; }
.admin { left: 269px; top: 352px; width: 490px; height: 496px; padding-top: 4px; box-shadow: 12px 12px 8px -4px rgba(0,0,0,.5), inset 4px 4px 0 #fff; border-left-color: #c0c0c0; }
.admin .item { margin-left: 5px; }
.admin .slot { width: 64px; display: flex; align-items: center; padding-left: 6px; box-sizing: border-box; }
.admin .new { width: 46px; height: 42px; margin-left: 4px; }
.admin .export, .admin .import { width: 46px; height: 38px; }
.on { background: #000080; color: #fff; }
.off { color: #868686; text-shadow: 2px 2px 0 #fff; }
.sub { position: absolute; right: 8px; top: 50%; margin-top: -14px; border: 11px solid transparent; border-left: 12px solid #000; border-right: 0; }
.on .sub { border-left-color: #fff; }
.newmenu { left: 756px; top: 350px; width: 419px; height: 705px; padding: 3px 6px 0 5px; border-right-width: 4px; box-shadow: 10px 10px 8px -4px rgba(0,0,0,.55), inset 3px 3px 0 #fff; }
.newmenu .item { height: 57.400px; padding: 3px 0 0 6px; box-sizing: border-box; }
.newmenu .ic { width: 46px; height: 46px; margin-right: 12px; }

.win-r .titlebar { height: 34px; background: linear-gradient(90deg, #000080 12%, #0a54b4); gap: 5px; padding-left: 3px; font-size: 22.500px; }
.win-r .app { width: 31px; height: 31px; }
.win-r .menubar { height: 42px; padding: 0 0 3px 12px; box-sizing: border-box; grid-template-columns: 54px 93.500px 149px 99px auto; }
.win-r .toolbar { height: 48px; padding: 0 0 3px 7px; box-sizing: border-box; }
.win-r .grip { width: 6px; height: 34px; border-width: 2px; }
.win-r .b-new { width: 30px; height: 30px; margin-left: 22px; }
.win-r .drop { margin-left: 9px; border-width: 6px 5px 0; }
.win-r .b-save { width: 29px; height: 29px; margin-left: 18px; }
.win-r .b-all { width: 30px; height: 30px; margin-left: 17px; }
.win-r .g2 { margin-left: 18px; }
.win-r .b-torch { width: 32px; height: 30px; margin-left: 15px; }
.win-r .g3 { margin-left: 18px; }
.help { width: 28px; height: 28px; box-sizing: border-box; margin-left: 17px; border: 3px solid #34689c; border-radius: 50%; background: #fff; color: #34689c; font-size: 22px; font-weight: 700; line-height: 23px; text-align: center; }

.win-r .body { height: 1497px; flex: none; }
.win-r .navpane { width: 427px; margin-left: 6px; display: flex; flex-direction: column; position: relative; border-bottom: 3px solid #858585; box-sizing: border-box; }
.win-r .navhead { position: relative; height: 51px; flex: none; display: flex; align-items: center; padding: 0 0 6px 11px; box-sizing: border-box; }
.curve { position: absolute; left: 0; top: 0; }
.win-r .navhead > *:not(.curve), .tabs > *:not(.curve) { position: relative; }
.win-r .nav-ic { width: 31px; height: 31px; margin-right: 6px; }
.x { width: 21px; height: 21px; }
.win-r .navhead .x { margin-left: 15px; }
.sync { width: 32px; height: 31px; margin-left: 141px; }
.min { width: 20px; height: 9px; border: 2.500px solid #000; background: #fff; margin: -17px 15px 0 17px; }
.max { width: 20px; height: 20px; border: 2.500px solid #000; border-top-width: 5px; background: #fff; margin-top: -6px; }
.win-r .tree { flex: 1; border: 3px solid #111; border-right: 2px solid #d4d4d4; border-bottom: 2px solid #d4d4d4; margin: 0 6px 4px 9px; position: relative; }
.win-r .navpane::before { content: ""; position: absolute; left: 0; top: 40px; bottom: 0; width: 421px; border: 2.500px solid #858585; border-width: 0 2.500px; }

.main { flex: 1; margin-left: 6px; display: flex; flex-direction: column; min-width: 0; }
.tabs { position: relative; height: 46px; flex: none; display: flex; align-items: center; }
.tabs .ic { width: 31px; height: 31px; margin-left: 9px; }
.tabs .tx1 { margin-left: 8px; width: 128px; }
.tabs .ic2 { margin-left: 9px; }
.tabs .tx2 { margin-left: 8px; }
.tabs .x { margin-left: 15px; }
.editor { height: 1016px; flex: none; border-left: 3px solid #858585; background: #fff; box-sizing: border-box; }
h2, h3 { margin: 0; font-weight: 700; color: #000080; display: flex; align-items: center; box-sizing: border-box; }
h2 { height: 72px; padding: 0 0 5px 17px; font-family: "Noto Sans", sans-serif; font-size: 32px; }
h3 { height: 40px; margin: 0 18px 0 14px; padding: 0 0 5px 10px; font-size: 24px; border-top: 3px solid #c3c1e2; border-radius: 8px 8px 0 0; background: linear-gradient(#e2e2f2, #fff); box-shadow: inset 0 2px 0 #fff; }
.form { display: grid; grid-template-columns: 146px 984px; grid-template-rows: 56px 56px 84px 46px 44px; margin: 13px 0 18px 36px; }
.form label { height: 25px; display: flex; align-items: center; }
.form .mid { height: auto; display: flex; align-items: center; }
.field { height: 34px; display: flex; align-items: center; padding: 0 0 0 2px; box-sizing: border-box; border: 2px solid #bbb; border-top: 4px solid #111; border-left: 3px solid #111; }
.short { width: 499px; color: #8c8c8c; }
.area { height: 72px; padding: 0; justify-content: flex-end; }
.scroll { width: 32px; height: 68px; display: flex; flex-direction: column; justify-content: space-between; background: #ddd; }
.up, .dn { height: 31px; background: #c0c0c0; border: 3px solid #eee; border-right-color: #000; border-bottom-color: #000; position: relative; }
.up::before, .dn::before { content: ""; position: absolute; left: 5px; top: 9px; border: 8px solid transparent; border-top: 0; border-bottom: 8px solid #808080; filter: drop-shadow(1px 2px 0 #fff); }
.dn::before { border-top: 8px solid #808080; border-bottom: 0; }
.assoc { display: flex; align-items: flex-start; gap: 31px; margin: 31px 0 0 36px; }
.grid { width: 633px; height: 229px; box-sizing: border-box; overflow: hidden; border: 2px solid #bbb; border-left: 3px solid #111; border-top: 3px solid #111; }
.gh, .gr { display: flex; box-sizing: border-box; }
.gh > span, .gr > span, .lh > span, .lr > span { display: flex; align-items: center; box-sizing: border-box; flex: none; padding-top: 3px; }
.gh { height: 34px; border-bottom: 3px solid #111; background: #c0c0c0; box-shadow: inset 0 2px 0 #eee; }
.gh > span { border-left: 2px solid #eee; border-right: 3px solid #111; }
.gr { height: 28.750px; border-bottom: 2px solid #c0c0c0; }
.gr > span { border-right: 2px solid #c0c0c0; padding-top: 1px; }
.grid .a { width: 117px; }
.grid .b { width: 482px; padding-left: 9px; }
.grid .c { flex: 1; border-right: 0; }
.gh > .a { padding-left: 11px; }
.gr > .b { background: #f6f6f6; }
.check { width: 25px; height: 25px; border: 4px solid #000; margin: 0 14px 0 8px; background: #fff; }
.sort { margin-left: 17px; border: 7px solid transparent; border-top: 0; border-bottom: 8px solid #808080; }
.btns { display: flex; flex-direction: column; gap: 10px; }
.btn { width: 101px; height: 44px; box-sizing: border-box; border: 2px solid #111; background: #c0c0c0; box-shadow: inset 3px 3px 0 #f2f2f2, inset -3px -3px 0 #808080; display: flex; align-items: center; justify-content: center; }

.listpane { margin-top: 4px; flex: 1; min-height: 0; display: flex; flex-direction: column; overflow: hidden; }
.listpane .tabs { height: 50px; padding-bottom: 2px; box-sizing: border-box; }
.wi { width: 24px; height: 24px; margin-left: 13px; }
.listpane .tx1 { margin-left: 12px; width: 217px; }
.listpane .tabs .x { margin-left: 17px; }
.list { border-left: 4px solid #9999cc; margin-left: 3px; background: #fff; overflow: hidden; }
.lh { display: flex; height: 32px; background: #c0c0c0; border-bottom: 3px solid #111; box-sizing: border-box; box-shadow: inset 0 2px 0 #eee; }
.lh > span { border-left: 2px solid #eee; border-right: 3px solid #111; padding: 4px 0 0 8px; }
.lr { display: flex; height: 27.030px; border-bottom: 2px solid #c0c0c0; box-sizing: border-box; }
.lr > span { border-right: 2px solid #c0c0c0; padding: 3px 0 0 10px; }
.list .c-id { width: 118px; padding-left: 12px; }
.lh > .c-id { padding-left: 11px; }
.list .c-name { width: 481px; }
.list .c-out { width: 211px; }
.list .c-ver { width: 154px; }
.list .c-rights { width: 154px; }
.lr > .c-rights, .lr > .c-out, .lr > .c-date { padding-left: 11px; }
.list .c-date { width: 120px; }
.lr > .c-name { background: #f6f6f6; }
.lr.sel { color: #fff; background: linear-gradient(90deg, #fff 8px, #000080 8px); position: relative; }
.lr.sel::before { content: ""; position: absolute; left: 8px; right: 0; top: 0; border-top: 2px dotted #c8c860; }
.lr.sel > .c-name { background: #000080; }
.status { flex: 1; border-bottom: 3px solid #d8d8d8; box-shadow: inset 0 -3px 0 #fff; }

.frame { border: 9px solid #3366ff; box-shadow: -4px -4px 0 #86a3ff, 4px 4px 0 #24409c, inset 4px 4px 0 #24409c, inset -4px -4px 0 #86a3ff; }
.f-new { left: 244px; top: 344px; width: 559px; height: 84px; }
.f-file { left: 744px; top: 619px; width: 459px; height: 109px; }
.f-tree { left: 1319px; top: 569px; width: 209px; height: 59px; }
.f-list { left: 1693px; top: 1418px; width: 1234px; height: 460px; }
.step { left: 944px; top: 624px; font-family: Roboto, sans-serif; font-size: 93px; line-height: 93px; color: #7889fb; }
.arrows { left: -2px; top: -2px; }
.cap { font-size: 75px; font-weight: 700; line-height: 80px; color: #0033cc; }
.cap-file { left: 1325px; top: 1993px; }
.cap-list { left: 1876px; top: 1999px; }
.page { left: 281px; top: 2107px; font-family: Roboto, sans-serif; font-size: 55px; line-height: 60px; color: #7889fb; }
.copy { left: 1389px; top: 2130px; font-size: 41px; line-height: 46px; color: #000; }
</style>
